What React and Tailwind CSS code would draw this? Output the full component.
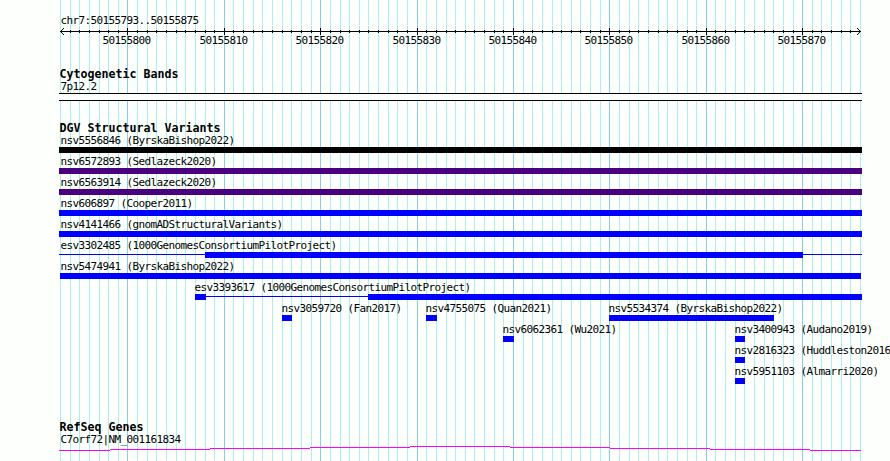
const REGION_START = 50155793;
const REGION_END = 50155875;
const BASES = REGION_END - REGION_START + 1;
const PLOT_LEFT = 60;
const PLOT_WIDTH = 800;

const gridLines = Array.from({ length: BASES + 1 }, (_, i) => ({
  x: Math.round(PLOT_LEFT + (i * PLOT_WIDTH) / BASES),
  position: REGION_START + i,
  major: (REGION_START + i) % 10 === 0,
}));

// each row holds the features that fit side by side, x values in pixels
const variantRows = [
  [{ label: 'nsv5556846 (ByrskaBishop2022)', labelX: 60, color: 'bg-black', parts: [[59, 862]] }],
  [{ label: 'nsv6572893 (Sedlazeck2020)', labelX: 60, color: 'bg-[#4b0082]', parts: [[59, 862]] }],
  [{ label: 'nsv6563914 (Sedlazeck2020)', labelX: 60, color: 'bg-[#4b0082]', parts: [[59, 862]] }],
  [{ label: 'nsv606897 (Cooper2011)', labelX: 60, parts: [[59, 862]] }],
  [{ label: 'nsv4141466 (gnomADStructuralVariants)', labelX: 60, parts: [[59, 862]] }],
  [
    {
      label: 'esv3302485 (1000GenomesConsortiumPilotProject)',
      labelX: 60,
      parts: [[59, 205, 'thin'], [205, 803], [803, 862, 'thin']],
    },
  ],
  [{ label: 'nsv5474941 (ByrskaBishop2022)', labelX: 60, parts: [[60, 861]] }],
  [
    {
      label: 'esv3393617 (1000GenomesConsortiumPilotProject)',
      labelX: 194,
      parts: [[195, 206], [206, 368, 'thin'], [368, 862]],
    },
  ],
  [
    { label: 'nsv3059720 (Fan2017)', labelX: 281, parts: [[282, 292]] },
    { label: 'nsv4755075 (Quan2021)', labelX: 425, parts: [[426, 437]] },
    { label: 'nsv5534374 (ByrskaBishop2022)', labelX: 608, parts: [[609, 774]] },
  ],
  [
    { label: 'nsv6062361 (Wu2021)', labelX: 502, parts: [[503, 514]] },
    { label: 'nsv3400943 (Audano2019)', labelX: 734, parts: [[735, 745]] },
  ],
  [{ label: 'nsv2816323 (Huddleston2016', labelX: 734, parts: [[735, 745]] }],
  [{ label: 'nsv5951103 (Almarri2020)', labelX: 734, parts: [[735, 745]] }],
];

const geneSteps = [
  [59, 450],
  [110, 449],
  [210, 448],
  [310, 447],
  [410, 446],
  [510, 447],
  [610, 448],
  [710, 449],
  [810, 450],
  [861, 450],
];

function Label({ children }) {
  return (
    <span className="block h-[13px] whitespace-pre pl-[0.4px] text-[11px] leading-[13px] tracking-[-0.622px]">
      {children}
    </span>
  );
}

function TrackTitle({ children }) {
  return (
    <h2 className="h-[13px] pl-[59.5px] whitespace-pre text-[11.63px] font-bold leading-[13px]">
      {children}
    </h2>
  );
}

function Grid() {
  return (
    <svg className="absolute inset-0" width="890" height="461" shapeRendering="crispEdges">
      {gridLines.map(({ x, major }) => (
        <rect key={x} x={x} y="0" width="1" height="461" fill={major ? '#87ceeb' : '#afeeee'} />
      ))}
    </svg>
  );
}

function Ruler() {
  const ticks = gridLines.slice(1, -1);
  return (
    <div>
      <svg className="block" width="890" height="8" shapeRendering="crispEdges">
        <rect x="60" y="4" width="801" height="1" />
        {ticks.map(({ x, major }) => (
          <rect key={x} x={x} y={major ? 1 : 3} width="1" height={major ? 7 : 3} />
        ))}
        <path d="M61 3h1v1h-1zM62 2h1v1h-1zM63 1h1v1h-1zM61 5h1v1h-1zM62 6h1v1h-1zM63 7h1v1h-1z" />
        <path d="M859 3h1v1h-1zM858 2h1v1h-1zM857 1h1v1h-1zM859 5h1v1h-1zM858 6h1v1h-1zM857 7h1v1h-1z" />
      </svg>
      <div className="-mt-px flex h-[13px] pl-[102px]">
        {ticks
          .filter((tick) => tick.major)
          .map(({ x, position }, i, list) => (
            <div
              key={position}
              className="shrink-0"
              style={{ width: i < list.length - 1 ? list[i + 1].x - x : 49 }}
            >
              <Label>{position}</Label>
            </div>
          ))}
      </div>
    </div>
  );
}

function FeatureRow({ features }) {
  let labelEnd = 0;
  let barEnd = 0;

  return (
    <div className="h-[21px]">
      <div className="flex h-[13px]">
        {features.map(({ label, labelX }) => {
          const gap = labelX - labelEnd;
          const width = label.length * 6;
          labelEnd = labelX + width;
          return (
            <div key={label} className="shrink-0" style={{ marginLeft: gap, width }}>
              <Label>{label}</Label>
            </div>
          );
        })}
      </div>
      <div className="flex h-[6px]">
        {features.flatMap(({ parts, color = 'bg-[#0000ff]' }) =>
          parts.map(([start, end, kind]) => {
            const gap = start - barEnd;
            barEnd = end;
            return (
              <div
                key={start}
                className={`shrink-0 ${color} ${kind === 'thin' ? 'mt-[2px] h-px' : 'h-[6px]'}`}
                style={{ marginLeft: gap, width: end - start }}
              />
            );
          })
        )}
      </div>
    </div>
  );
}

function GeneProfile() {
  return (
    <svg className="block" width="890" height="6" viewBox="0 446 890 6" shapeRendering="crispEdges">
      {geneSteps.slice(0, -1).map(([x, y], i) => (
        <rect key={x} x={x} y={y} width={geneSteps[i + 1][0] - x} height="1" fill="#ff00ff" />
      ))}
    </svg>
  );
}

export default function App() {
  return (
    <main className="relative h-[461px] w-[890px] overflow-hidden bg-[#fdfffc] font-['DejaVu_Sans_Mono',monospace] text-black">
      <Grid />
      <div className="relative flex h-full flex-col">
        <section className="pt-[14px]">
          <div className="pl-[60px]">
            <Label>chr7:50155793..50155875</Label>
          </div>
          <Ruler />
        </section>

        <section className="mt-[21px]">
          <TrackTitle>Cytogenetic Bands</TrackTitle>
          <div className="-mt-px pl-[60px]">
            <Label>7p12.2</Label>
          </div>
          <div className="ml-[59px] h-2 w-[803px] border-y border-black bg-[#fdfffc]" />
        </section>

        <section className="mt-[21px]">
          <TrackTitle>DGV Structural Variants</TrackTitle>
          <div className="-mt-px">
            {variantRows.map((features) => (
              <FeatureRow key={features[0].label} features={features} />
            ))}
          </div>
        </section>

        <section className="mt-[35px]">
          <TrackTitle>RefSeq Genes</TrackTitle>
          <div className="-mt-px pl-[60px]">
            <Label>C7orf72|NM_001161834</Label>
          </div>
          <GeneProfile />
        </section>
      </div>
    </main>
  );
}
